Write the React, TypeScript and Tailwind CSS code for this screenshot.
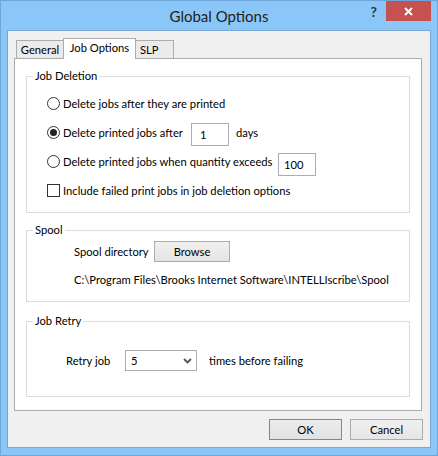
import { useState } from 'react';

function Radio({ checked }: { checked?: boolean }) {
  return (
    <span className="w-[13px] h-[13px] rounded-full border border-[#333333] bg-white flex items-center justify-center shrink-0">
      {checked && <span className="w-[7px] h-[7px] rounded-full bg-[#222222]" />}
    </span>
  );
}

export default function App() {
  const [mode, setMode] = useState(1);

  return (
    <div className="w-[438px] h-[456px] bg-[#8bc6f8] border border-[#6ea6da] flex flex-col font-['Segoe_UI','Lato',sans-serif] text-[11.2px] text-black leading-[16px] overflow-hidden whitespace-nowrap">
      {/* title bar */}
      <div className="h-[29px] relative flex items-center justify-center shrink-0">
        <span className="text-[15px] text-[#222222] leading-[20px]">Global Options</span>
        <span className="absolute right-[60px] top-[3px] text-[14px] font-bold text-[#333333]">?</span>
        <div className="absolute right-[6px] top-0 w-[45px] h-[20px] bg-[#c75050] flex items-center justify-center">
          <svg width="9" height="9" viewBox="0 0 9 9">
            <path d="M1 1 L8 8 M8 1 L1 8" stroke="#ffffff" strokeWidth="2" />
          </svg>
        </div>
      </div>

      {/* client area */}
      <div className="flex-1 mx-[6px] mb-[7px] border border-[#7aa7d2] bg-[#f0f0f0] flex flex-col">
        {/* tabs */}
        <div className="flex items-end pt-[7px] ml-[8px] h-[27px]">
          <div className="w-[48px] h-[18px] border border-b-0 border-[#acacac] bg-[#ebebeb] text-center leading-[17px]">General</div>
          <div className="w-[73px] h-[21px] -ml-px -mb-px relative z-10 border border-b-0 border-[#acacac] bg-white text-center leading-[18px]">Job Options</div>
          <div className="w-[39px] h-[18px] -ml-px border border-b-0 border-[#acacac] bg-[#ebebeb] pl-[4px] leading-[17px]">SLP</div>
        </div>

        {/* tab panel */}
        <div className="ml-[6px] mr-[8px] h-[353px] border border-[#acacac] bg-white px-[11px] flex flex-col">
          {/* Job Deletion */}
          <fieldset className="mt-[9px] border border-[#dcdcdc]">
            <legend className="ml-[6px] px-[2px] leading-[16px]">Job Deletion</legend>
            <div className="pt-[5px] pb-[7px] pl-[20px]">
              <label className="h-[29px] flex items-center gap-[3px]" onClick={() => setMode(0)}>
                <Radio checked={mode === 0} />
                <span>Delete jobs after they are printed</span>
              </label>
              <div className="h-[29px] flex items-center">
                <label className="flex items-center gap-[3px] w-[144px]" onClick={() => setMode(1)}>
                  <Radio checked={mode === 1} />
                  <span>Delete printed jobs after</span>
                </label>
                <div className="mt-[4px] w-[38px] h-[23px] border border-[#abadb3] pl-[8px] leading-[21px]">1</div>
                <span className="ml-[7px]">days</span>
              </div>
              <div className="h-[29px] flex items-center">
                <label className="flex items-center gap-[3px] w-[231px]" onClick={() => setMode(2)}>
                  <Radio checked={mode === 2} />
                  <span>Delete printed jobs when quantity exceeds</span>
                </label>
                <div className="mt-[6px] w-[38px] h-[23px] border border-[#abadb3] pl-[5px] leading-[21px]">100</div>
              </div>
              <div className="h-[29px] flex items-center gap-[3px]">
                <span className="w-[13px] h-[13px] border border-[#333333] bg-white shrink-0" />
                <span>Include failed print jobs in job deletion options</span>
              </div>
            </div>
          </fieldset>

          {/* Spool */}
          <fieldset className="mt-[9px] border border-[#dcdcdc]">
            <legend className="ml-[6px] px-[2px] leading-[16px]">Spool</legend>
            <div className="pt-[3px] pb-[13px] pl-[47px]">
              <div className="h-[21px] flex items-center">
                <span className="w-[80px]">Spool directory</span>
                <button className="w-[76px] h-[21px] border border-[#acacac] bg-gradient-to-b from-[#f0f0f0] to-[#e5e5e5] leading-[19px]">Browse</button>
              </div>
              <div className="mt-[10px]">C:\Program Files\Brooks Internet Software\INTELLIscribe\Spool</div>
            </div>
          </fieldset>

          {/* Job Retry */}
          <fieldset className="mt-[11px] border border-[#dcdcdc]">
            <legend className="ml-[6px] px-[2px] leading-[16px]">Job Retry</legend>
            <div className="pt-[21px] pb-[25px] pl-[39px]">
              <div className="h-[21px] flex items-center">
                <span className="w-[59px]">Retry job</span>
                <div className="w-[72px] h-[21px] border border-[#abadb3] bg-white flex items-center justify-between pl-[5px] pr-[4px]">
                  <span>5</span>
                  <svg width="9" height="6" viewBox="0 0 9 6">
                    <path d="M1 1 L4.5 4.5 L8 1" stroke="#555555" strokeWidth="1.8" fill="none" />
                  </svg>
                </div>
                <span className="ml-[12px]">times before failing</span>
              </div>
            </div>
          </fieldset>
        </div>

        {/* buttons */}
        <div className="flex justify-end gap-[8px] mt-[8px] pr-[7px]">
          <button className="w-[73px] h-[21px] border border-[#3399ff] bg-gradient-to-b from-[#ececec] to-[#e2e2e2] leading-[19px]">OK</button>
          <button className="w-[73px] h-[21px] border border-[#acacac] bg-gradient-to-b from-[#f0f0f0] to-[#e5e5e5] leading-[19px]">Cancel</button>
        </div>
      </div>
    </div>
  );
}
